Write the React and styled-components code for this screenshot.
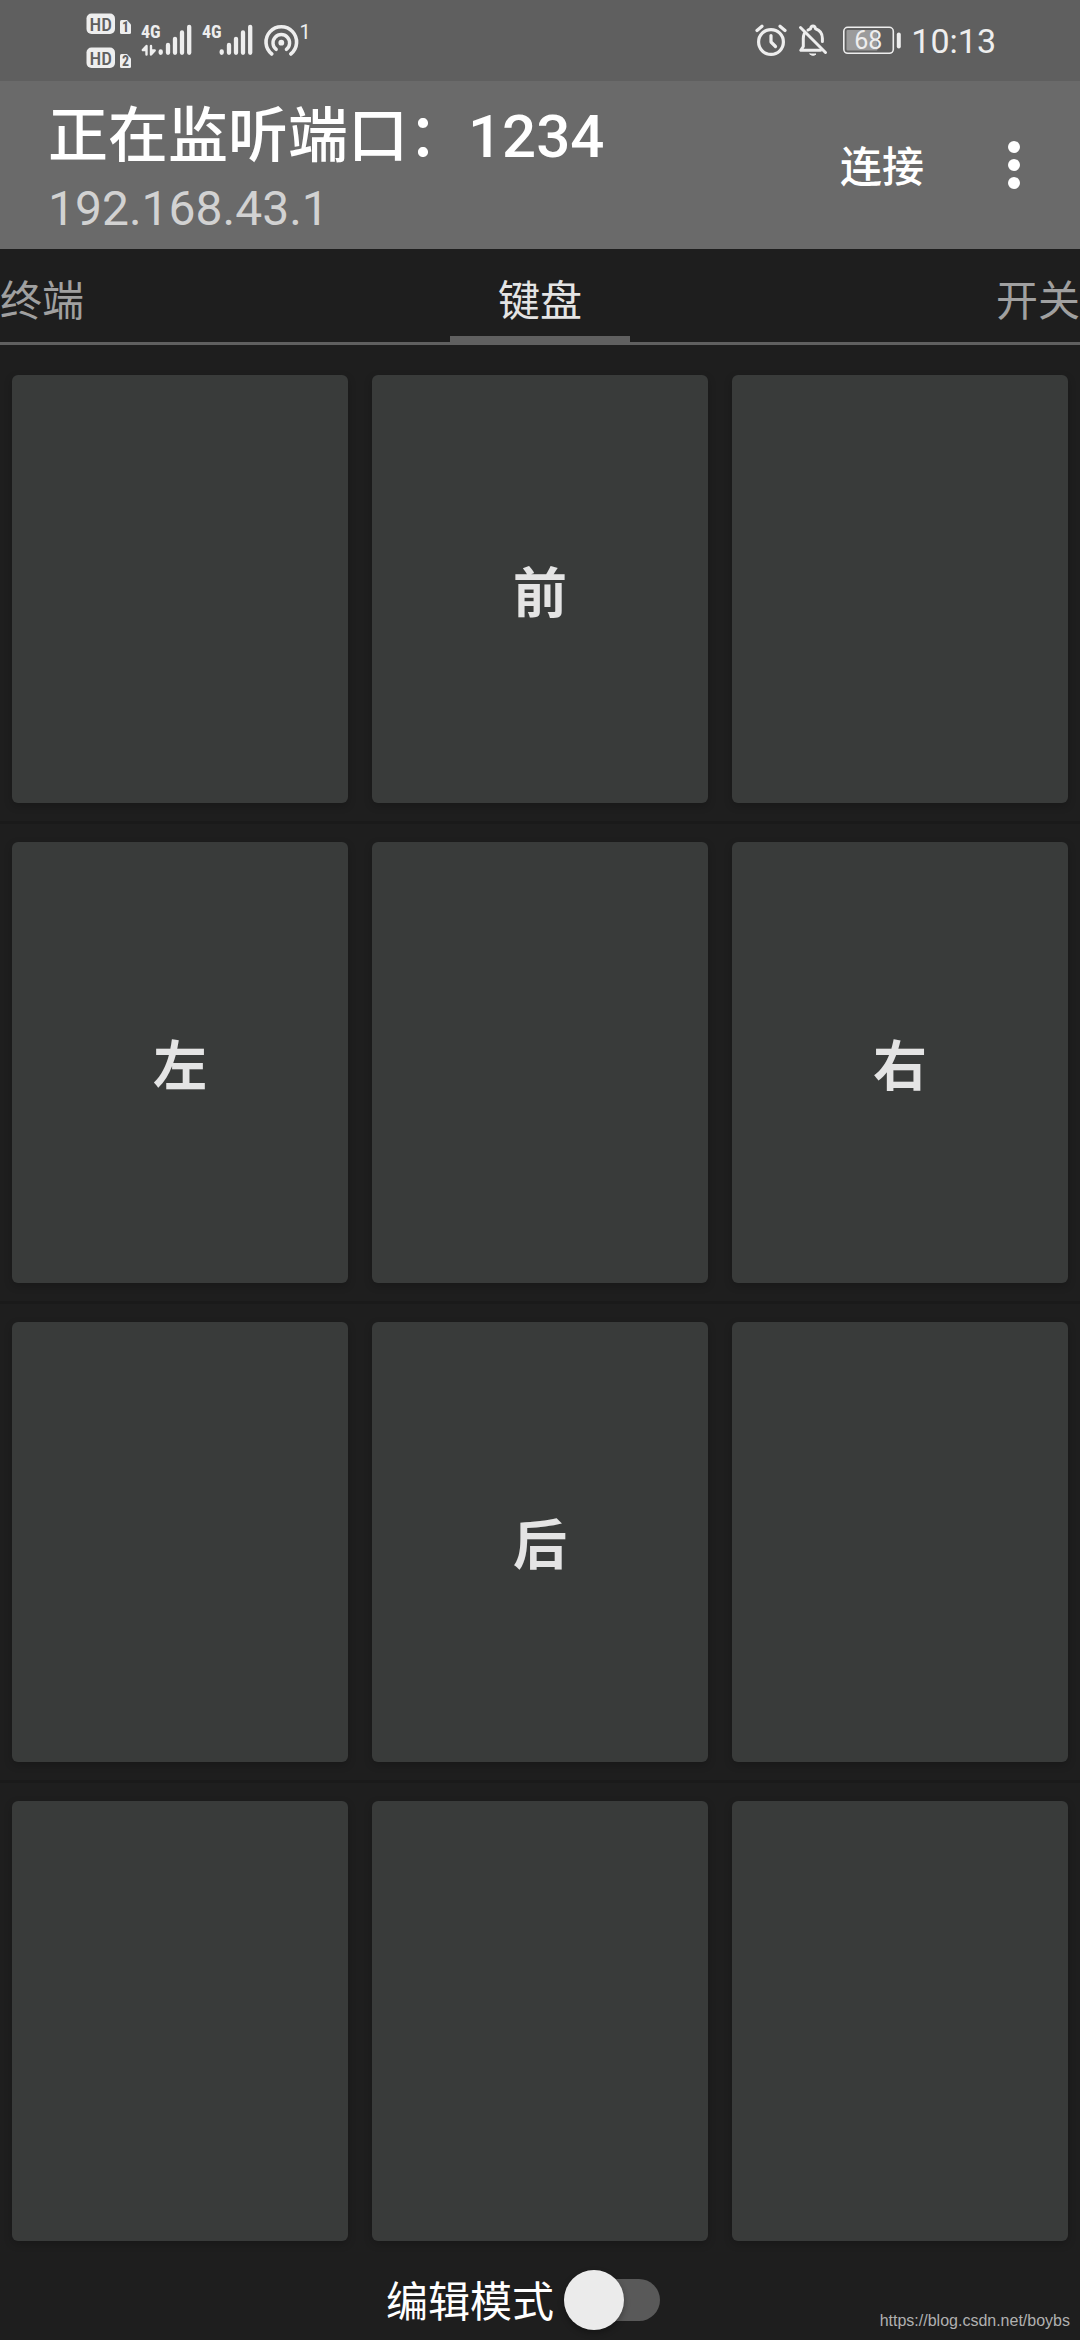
import React, { useState } from 'react'
import styled, { createGlobalStyle } from 'styled-components'

const GlobalStyle = createGlobalStyle`
  * {
    box-sizing: border-box;
  }
  body {
    margin: 0;
    background-color: #1e1e1e;
    font-family: Roboto, "Noto Sans CJK SC", sans-serif;
  }
  button {
    font-family: inherit;
    margin: 0;
    border: 0;
    background: none;
  }
`

const Screen = styled.div`
  position: relative;
  display: flex;
  flex-direction: column;
  min-height: 100vh;
  color: #e4e4e4;
`

const StatusBar = styled.div`
  display: flex;
  align-items: center;
  justify-content: space-between;
  height: 81px;
  padding: 0 84px 0 86px;
  background-color: #5f5f5f;
  color: #eeeeee;
`

const StatusGroup = styled.div`
  display: flex;
  align-items: center;
  gap: ${props => props.$gap}px;
  & svg {
    display: block;
    fill: none;
    stroke: #eeeeee;
    stroke-linecap: round;
    stroke-linejoin: round;
  }
  & text {
    stroke: none;
    fill: #eeeeee;
  }
`

const Clock = styled.span`
  font-size: 34px;
  line-height: 40px;
`

const AppBar = styled.header`
  display: flex;
  align-items: center;
  height: 168px;
  padding: 0 36px 0 48px;
  background-color: #6a6a6a;
  color: #ffffff;
`

const Titles = styled.div`
  flex: 1;
  padding-top: 8px;
`

const Title = styled.h1`
  margin: 0 0 4px;
  font-size: 60px;
  font-weight: 500;
  line-height: 76px;
`

const Subtitle = styled.p`
  margin: 0;
  font-size: 48px;
  line-height: 60px;
  color: #d2d2d2;
`

const BarButton = styled.button`
  display: flex;
  align-items: center;
  justify-content: center;
  height: 120px;
  padding: 0 24px 4px;
  font-size: 42px;
  font-weight: 500;
  color: #ffffff;
`

const MenuButton = styled(BarButton)`
  width: 60px;
  margin-left: 36px;
  padding: 0;
`

const Tabs = styled.nav`
  display: grid;
  grid-template-columns: 1fr auto 1fr;
  height: 96px;
  border-bottom: 3px solid #606060;
`

const Tab = styled.button`
  justify-self: ${props => props.$align};
  padding: 18px ${props => (props.$active ? '48px' : '0')} 0;
  border-bottom: 6px solid ${props => (props.$active ? '#606060' : 'transparent')};
  font-size: 42px;
  line-height: 60px;
  color: ${props => (props.$active ? '#e4e4e4' : '#a0a0a0')};
`

/* the 3px gaps let the darker background through as dividers */
const Keypad = styled.main`
  flex: 1;
  display: grid;
  grid-template-rows: repeat(4, 1fr);
  gap: 3px;
  background-color: #1a1a1a;
`

const KeyRow = styled.div`
  display: grid;
  grid-template-columns: repeat(3, 1fr);
  gap: 24px;
  padding: 18px 12px;
  background-color: #1e1e1e;
  &:first-child {
    padding-top: 30px;
  }
`

const Key = styled.button`
  padding: 0;
  border-radius: 6px;
  background-color: #393b3a;
  box-shadow: 0 3px 9px rgba(0, 0, 0, 0.2);
  font-size: 54px;
  font-weight: 700;
  color: #e4e4e4;
`

const Footer = styled.footer`
  display: flex;
  align-items: center;
  justify-content: center;
  gap: 10px;
  height: 81px;
  padding-right: 34px;
`

const SwitchLabel = styled.label`
  padding-top: 6px;
  font-size: 42px;
  line-height: 60px;
  color: #ffffff;
`

const SwitchTrack = styled.span`
  display: flex;
  align-items: center;
  height: 42px;
  border-radius: 21px;
  background-color: #595959;
`

const Switch = styled.input`
  appearance: none;
  display: flex;
  align-items: center;
  width: 96px;
  height: 60px;
  margin: 0;
  &::before {
    content: '';
    width: 60px;
    height: 60px;
    border-radius: 50%;
    background-color: #ebebeb;
    box-shadow: 0 3px 6px rgba(0, 0, 0, 0.3);
  }
  &:checked::before {
    margin-left: 36px;
  }
`

const Watermark = styled.a`
  position: absolute;
  right: 10px;
  bottom: 9px;
  font-family: "Liberation Sans", Arial, sans-serif;
  font-size: 16px;
  line-height: 20px;
  text-decoration: none;
  color: #b0b0b0;
`

const NARROW = '"Roboto Condensed", Roboto, sans-serif'

const HdIcon = () => (
  <svg width="46" height="57" viewBox="0 0 46 57" aria-hidden="true">
    {[0, 34].map((y, i) => (
      <g key={y} transform={`translate(0 ${y})`}>
        <rect x="0.5" y="1.5" width="28.5" height="20.5" rx="5" fill="#eeeeee" stroke="none" />
        <text x="14.7" y="18.7" textAnchor="middle" fontSize="19" fontWeight="500" fontFamily={NARROW} style={{ fill: '#5f5f5f' }}>HD</text>
        <path d="M34 9.5 Q34 8 35.5 8 H41 L45 12.5 V20.5 Q45 22 43.5 22 H35.5 Q34 22 34 20.5 Z" fill="#eeeeee" stroke="none" />
        <text x="39.5" y="20" textAnchor="middle" fontSize="14" fontWeight="700" fontFamily={NARROW} style={{ fill: '#5f5f5f' }}>{i + 1}</text>
      </g>
    ))}
  </svg>
)

const SignalIcon = ({ data }) => (
  <svg width="52" height="57" viewBox="0 0 52 57" aria-hidden="true">
    <text x="0" y="26" fontSize="18" fontWeight="700" fontFamily={NARROW}>4G</text>
    {data && (
      <path d="M5.5 42.5 V34 L1.8 38 H5.5 M10 34 V42.5 L13.7 38.5 H10" strokeWidth="2.4" />
    )}
    <path d="M19.7 39.5 V40.8 M27 33 V40.8 M34 26.8 V40.8 M41 20.5 V40.8 M48.2 14.8 V40.8" strokeWidth="4.3" />
  </svg>
)

const HotspotIcon = () => (
  <svg width="48" height="57" viewBox="0 0 48 57" aria-hidden="true">
    <circle cx="18.3" cy="30.7" r="2.9" fill="#eeeeee" stroke="none" />
    <path d="M13.2 37.4 A8.3 8.3 0 1 1 23.4 37.4" strokeWidth="3.4" />
    <path d="M8.8 42 A15.3 15.3 0 1 1 27.8 42" strokeWidth="3.6" />
    <text x="36.5" y="27" fontSize="20" fontFamily="Roboto, sans-serif">1</text>
  </svg>
)

const AlarmIcon = () => (
  <svg width="32" height="36" viewBox="0 0 32 36" strokeWidth="3.2" aria-hidden="true">
    <circle cx="16" cy="19" r="12.4" />
    <path d="M16 12.5 V19 L20.5 23.5" />
    <path d="M2 7.5 L7 3.2 M25 3.2 L30 7.5" />
  </svg>
)

const BellOffIcon = () => (
  <svg width="32" height="36" viewBox="0 0 32 36" strokeWidth="3" aria-hidden="true">
    <path d="M3.5 4.5 L28.5 29.5" />
    <path d="M7.3 10.5 Q6.3 12.8 6.3 15.5 V23.5 L3.8 27.3 H23.5" />
    <path d="M11 7 L13.5 5.8 Q14 3 16 3 Q18 3 18.5 5.8 Q25.4 8 25.4 15.5 V18.5" />
    <path d="M13 31 H19 Q18 32.3 16 32.3 Q14 32.3 13 31 Z" fill="#eeeeee" strokeWidth="1" />
  </svg>
)

const BatteryIcon = () => (
  <svg width="62" height="36" viewBox="0 0 62 36" aria-hidden="true">
    <rect x="4.8" y="4.3" width="49.5" height="26" rx="4" strokeWidth="1.6" />
    <rect x="7.5" y="7" width="31" height="20.6" rx="1" fill="#9b9b9b" stroke="none" />
    <path d="M59.8 11.5 V23.5" strokeWidth="4" />
    <text x="29.3" y="26" textAnchor="middle" fontSize="25" fontFamily="Roboto, sans-serif">68</text>
  </svg>
)

const rows = [
  ['', '前', ''],
  ['左', '', '右'],
  ['', '后', ''],
  ['', '', ''],
]

const App = () => {
  const [tab, setTab] = useState('键盘')
  const [editing, setEditing] = useState(false)

  return (
    <>
      <GlobalStyle />
      <Screen>
        <StatusBar>
          <StatusGroup $gap={9}>
            <HdIcon />
            <SignalIcon data />
            <SignalIcon />
            <HotspotIcon />
          </StatusGroup>
          <StatusGroup $gap={10}>
            <AlarmIcon />
            <BellOffIcon />
            <BatteryIcon />
            <Clock>10:13</Clock>
          </StatusGroup>
        </StatusBar>
        <AppBar>
          <Titles>
            <Title>正在监听端口：1234</Title>
            <Subtitle>192.168.43.1</Subtitle>
          </Titles>
          <BarButton type="button">连接</BarButton>
          <MenuButton type="button" aria-label="菜单">
            <svg width="12" height="48" viewBox="0 0 12 48" fill="#ffffff">
              <circle cx="6" cy="6" r="6" />
              <circle cx="6" cy="24" r="6" />
              <circle cx="6" cy="42" r="6" />
            </svg>
          </MenuButton>
        </AppBar>
        <Tabs>
          <Tab type="button" $align="start" $active={tab === '终端'} onClick={() => setTab('终端')}>终端</Tab>
          <Tab type="button" $align="center" $active={tab === '键盘'} onClick={() => setTab('键盘')}>键盘</Tab>
          <Tab type="button" $align="end" $active={tab === '开关'} onClick={() => setTab('开关')}>开关</Tab>
        </Tabs>
        <Keypad>
          {rows.map((keys, r) => (
            <KeyRow key={r}>
              {keys.map((label, c) => (
                <Key key={c} type="button" aria-label={label || `按键 ${r * 3 + c + 1}`}>{label}</Key>
              ))}
            </KeyRow>
          ))}
        </Keypad>
        <Footer>
          <SwitchLabel htmlFor="edit-mode">编辑模式</SwitchLabel>
          <SwitchTrack>
            <Switch
              id="edit-mode"
              type="checkbox"
              role="switch"
              checked={editing}
              onChange={e => setEditing(e.target.checked)}
            />
          </SwitchTrack>
        </Footer>
        <Watermark href="https://blog.csdn.net/boybs">https://blog.csdn.net/boybs</Watermark>
      </Screen>
    </>
  )
}

export default App
